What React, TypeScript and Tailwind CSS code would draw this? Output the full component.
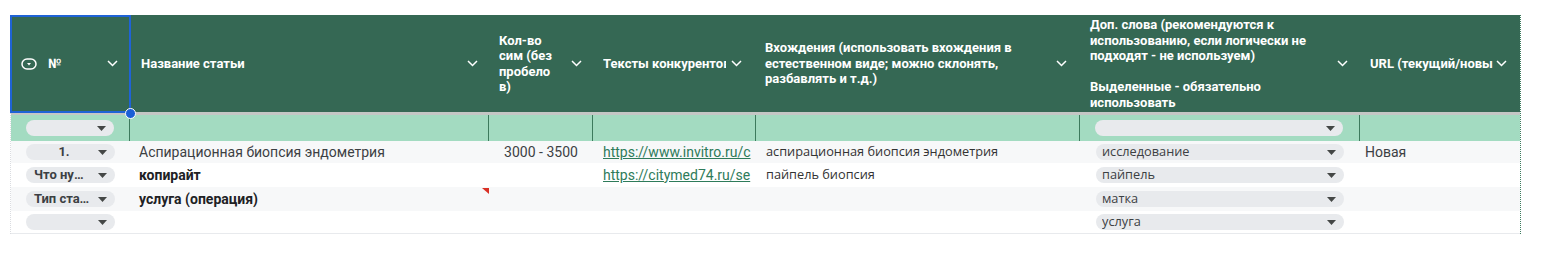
import React from 'react';

const GRID = 'grid grid-cols-[119px_359px_104px_163px_324px_280px_160px]';

// white chevron used in the header cells
const Chevron = () => (
  <svg width="11" height="7" viewBox="0 0 11 7" className="shrink-0">
    <polyline points="1,1 5.5,5.5 10,1" fill="none" stroke="#fff" strokeWidth="1.5" />
  </svg>
);

const Caret = () => (
  <svg width="9" height="5" viewBox="0 0 9 5" className="shrink-0">
    <polygon points="0,0 9,0 4.5,5" fill="#444746" />
  </svg>
);

// dropdown chip icon in the first header cell
const ChipIcon = () => (
  <svg width="16" height="12" viewBox="0 0 16 12" className="shrink-0">
    <rect x="1" y="1" width="14" height="10" rx="5" fill="none" stroke="#fff" strokeWidth="1.5" />
    <polygon points="6,5 10,5 8,7.5" fill="#fff" />
  </svg>
);

const Chip = ({ text, center }: { text?: string; center?: boolean }) => (
  <div className="flex h-[16px] w-full min-w-0 items-center rounded-full bg-[#e8eaed] pl-[6px] pr-[8px]">
    <span
      className={`min-w-0 flex-1 overflow-hidden text-ellipsis whitespace-nowrap ${
        center ? 'pl-[2px] pr-[4px] text-center text-[13px] font-bold text-[#3c4043]' : "font-['Open_Sans'] text-[12.75px] text-[#3c4043]"
      }`}
    >
      {text}
    </span>
    <Caret />
  </div>
);

const rows = [
  { num: '1.', title: 'Аспирационная биопсия эндометрия', bold: false, size: '3000 - 3500', link: 'https://www.invitro.ru/c', entry: 'аспирационная биопсия эндометрия', word: 'исследование', url: 'Новая', h: 'h-[22px]', bg: 'bg-[#f7f8f9]' },
  { num: 'Что нужно', title: 'копирайт', bold: true, size: '', link: 'https://citymed74.ru/se', entry: 'пайпель биопсия', word: 'пайпель', url: '', h: 'h-[24px]', bg: 'bg-white' },
  { num: 'Тип статьи', title: 'услуга (операция)', bold: true, size: '', link: '', entry: '', word: 'матка', url: '', h: 'h-[24px]', bg: 'bg-[#f7f8f9]', note: true },
  { num: '', title: '', bold: false, size: '', link: '', entry: '', word: 'услуга', url: '', h: 'h-[22px]', bg: 'bg-white' },
];

export default function App() {
  return (
    <div className="h-[264px] w-[1542px] bg-white pl-[10px] pt-[15px] font-['Roboto',sans-serif]">
      <div className="relative w-[1511px] border-l border-r border-dotted border-l-[#dadce0] border-r-[#3d7a5d]">
        {/* header */}
        <div className={`${GRID} h-[97px] bg-[#356854] text-[13px] font-bold leading-[15.5px] text-white`}>
          <div className="flex items-center pl-[10px] pr-[12px]">
            <ChipIcon />
            <span className="ml-[11px] flex-1">№</span>
            <Chevron />
          </div>
          <div className="flex items-center pl-[11px] pr-[11px]">
            <span className="flex-1">Название статьи</span>
            <Chevron />
          </div>
          <div className="flex items-center pl-[10px] pr-[11px]">
            <span className="w-[62px]">Кол-во<br />сим (без<br />пробело<br />в)</span>
            <span className="flex-1" />
            <Chevron />
          </div>
          <div className="flex items-center pl-[10px] pr-[14px]">
            <span className="w-[123px] overflow-hidden whitespace-nowrap">Тексты конкурентов</span>
            <span className="flex-1" />
            <Chevron />
          </div>
          <div className="flex items-center pl-[9px] pr-[13px]">
            <span className="flex-1 whitespace-nowrap">
              Вхождения (использовать вхождения в<br />естественном виде; можно склонять,<br />разбавлять и т.д.)
            </span>
            <Chevron />
          </div>
          <div className="flex items-center pl-[10px] pr-[12px]">
            <span className="flex-1 whitespace-nowrap">
              Доп. слова (рекомендуются к<br />использованию, если логически не<br />подходят - не используем)<br /><br />Выделенные - обязательно<br />использовать
            </span>
            <Chevron />
          </div>
          <div className="flex items-center pl-[10px] pr-[13px]">
            <span className="w-[123px] overflow-hidden whitespace-nowrap">URL (текущий/новый)</span>
            <span className="flex-1" />
            <Chevron />
          </div>
        </div>

        <div className="h-[3px] bg-[#c4c7c5]" />

        {/* filter row */}
        <div className={`${GRID} h-[26px] bg-[#a3dbc1]`}>
          <div className="flex items-center border-r border-[#3d7a5d] px-[15px]">
            <Chip center />
          </div>
          <div className="border-r border-[#3d7a5d]" />
          <div className="border-r border-[#3d7a5d]" />
          <div className="border-r border-[#3d7a5d]" />
          <div className="border-r border-[#3d7a5d]" />
          <div className="flex items-center border-r border-[#3d7a5d] pl-[15px] pr-[16px]">
            <Chip />
          </div>
          <div />
        </div>

        {/* data rows */}
        {rows.map((r, i) => (
          <div key={i} className={`${GRID} ${r.h} ${r.bg} items-center text-[14px] text-[#3c4043]`}>
            <div className="flex min-w-0 px-[15px]">
              <Chip text={r.num} center />
            </div>
            <div className={`relative flex h-full items-center pl-[9px] ${r.bold ? 'font-bold text-[#202124]' : ''}`}>
              {r.title}
              {r.note && (
                <svg width="7" height="6" viewBox="0 0 7 6" className="absolute right-0 top-[1px]">
                  <polygon points="0,0 7,0 7,6" fill="#d93025" />
                </svg>
              )}
            </div>
            <div className="text-center">{r.size}</div>
            <div className="overflow-hidden whitespace-nowrap pl-[10px] text-[#2e7b5a] underline">{r.link}</div>
            <div className="pl-[10px] font-['Open_Sans'] text-[12.75px] text-[#333]">{r.entry}</div>
            <div className="flex pl-[16px] pr-[16px]">
              <Chip text={r.word} />
            </div>
            <div className="pl-[5px]">{r.url}</div>
          </div>
        ))}
        <div className="h-px bg-[#e8eaed]" />

        {/* selection outline + fill handle */}
        <div className="absolute left-[-1px] top-0 h-[98px] w-[121px] border-2 border-[#1f63d6]" />
        <div className="absolute left-[114px] top-[93px] h-[11px] w-[11px] rounded-full border border-white bg-[#1a5fd6]" />
      </div>
    </div>
  );
}
